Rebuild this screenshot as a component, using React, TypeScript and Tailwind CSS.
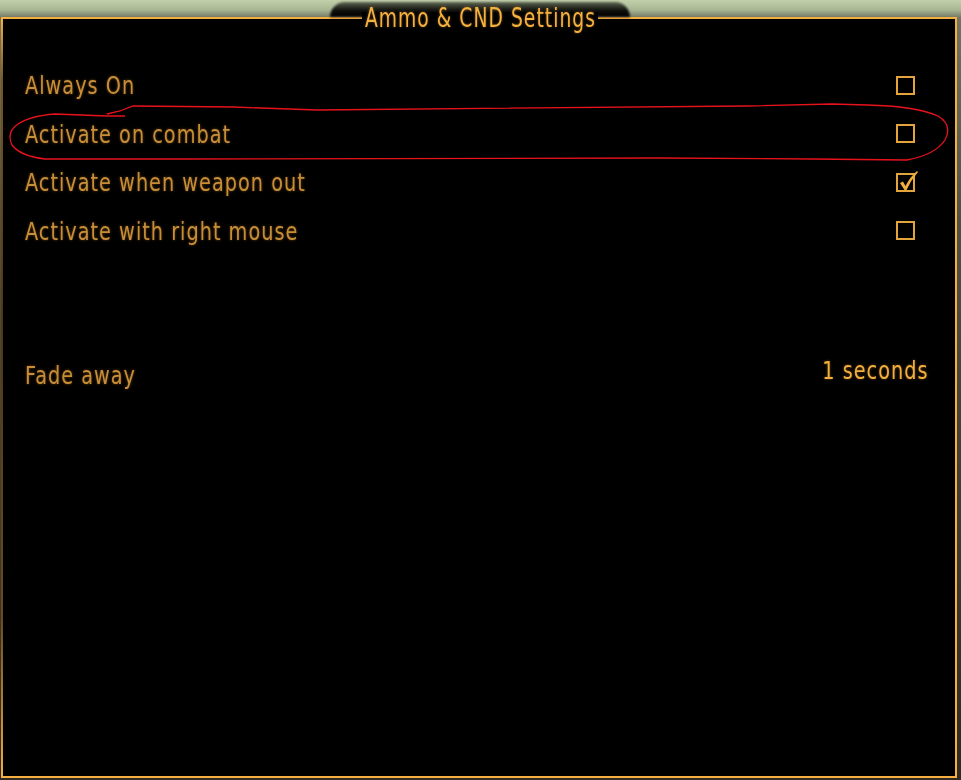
import React from "react";

const font = { fontFamily: '"Liberation Sans Narrow", "DejaVu Sans Condensed", "Liberation Sans", sans-serif' };

const rows = [
  { label: "Always On", checked: false },
  { label: "Activate on combat", checked: false },
  { label: "Activate when weapon out", checked: true },
  { label: "Activate with right mouse", checked: false },
];

const label =
  "inline-block origin-left scale-x-[0.84] text-[25.5px] leading-[30px] tracking-[1.2px] text-[#c68e38] [text-shadow:0_0_3px_rgba(160,100,20,0.7)]";

const CheckBox = ({ checked }: { checked: boolean }) => (
  <div className="relative w-[19px] h-[19px] border-2 border-[#e3a43c]">
    {checked && (
      <svg className="absolute -left-[2px] -top-[9px]" width="26" height="30" viewBox="0 0 26 30">
        <path d="M4 17 L7 15.5 L9.5 20 Q14 11 21 5 L22 6 Q15 14 10.5 24 L8.5 24 Z" fill="#f0ae40" />
      </svg>
    )}
  </div>
);

const App: React.FC = () => {
  return (
    <div
      className="relative w-[961px] h-[780px] pt-[17px] pl-[1px] pr-[4px] pb-[2px] bg-[linear-gradient(to_bottom,#c2d0ab_0px,#a9b692_10px,#6f7562_18px,#4d5142_220px,#38362c_600px,#2d2a22_100%)]"
      style={font}
    >
      <div className="flex h-full border-t-2 border-r-2 border-b-2 border-[#f5ae3f] bg-black">
        <div className="w-[2px] bg-[linear-gradient(to_bottom,#f5ae3f_0px,#7a5522_60px,#4e3818_300px,#6b4b1e_600px,#f5ae3f_100%)]" />
        <div className="flex-1 flex flex-col pl-[22px] pr-[27px] pt-[42px]">
          {rows.map((r) => (
            <div key={r.label} className="flex items-center justify-between h-[48.5px]">
              <span className={label}>{r.label}</span>
              <div className="mr-[13px]">
                <CheckBox checked={r.checked} />
              </div>
            </div>
          ))}
          <div className="flex items-start justify-between mt-[100px]">
            <span className={`${label} pt-[5px]`}>Fade away</span>
            <span className="inline-block origin-right scale-x-[0.84] text-[25.5px] leading-[30px] tracking-[1.2px] text-[#f2ae3e] [text-shadow:0_0_3px_rgba(230,150,40,0.5)]">
              1 seconds
            </span>
          </div>
        </div>
      </div>

      {/* title tab over the top border */}
      <div className="absolute left-[330px] top-[2px] w-[300px] h-[15px] rounded-t-[20px] bg-[linear-gradient(to_bottom,rgba(20,22,18,0.55),rgba(0,0,0,0.9)_55%,rgba(0,0,0,1))] blur-[1px]" />
      <div className="absolute left-[362px] top-[12px] w-[236px] h-[8px] bg-black" />
      <div className="absolute left-0 right-0 top-[3px] flex justify-center">
        <span className="inline-block scale-x-[0.8] text-[26px] leading-[30px] tracking-[1.3px] text-[#f4b13f] [text-shadow:0_0_3px_rgba(240,160,50,0.45)]">
          Ammo &amp; CND Settings
        </span>
      </div>

      {/* hand-drawn red annotation */}
      <svg className="absolute left-0 top-0 pointer-events-none" width="961" height="780">
        <path
          d="M125 116 L107 116 L55 114 Q30 116 18 124 Q6 132 12 145 Q20 156 45 159 L183 159 L660 158 L812 159 L907 160 Q935 155 945 140 Q953 125 938 116 Q915 106 867 105 L832 104 L747 106 L317 110 L233 107 L133 106 L120 111 L107 114"
          fill="none"
          stroke="#e8121c"
          strokeWidth="1.3"
        />
      </svg>
    </div>
  );
};

export default App;
